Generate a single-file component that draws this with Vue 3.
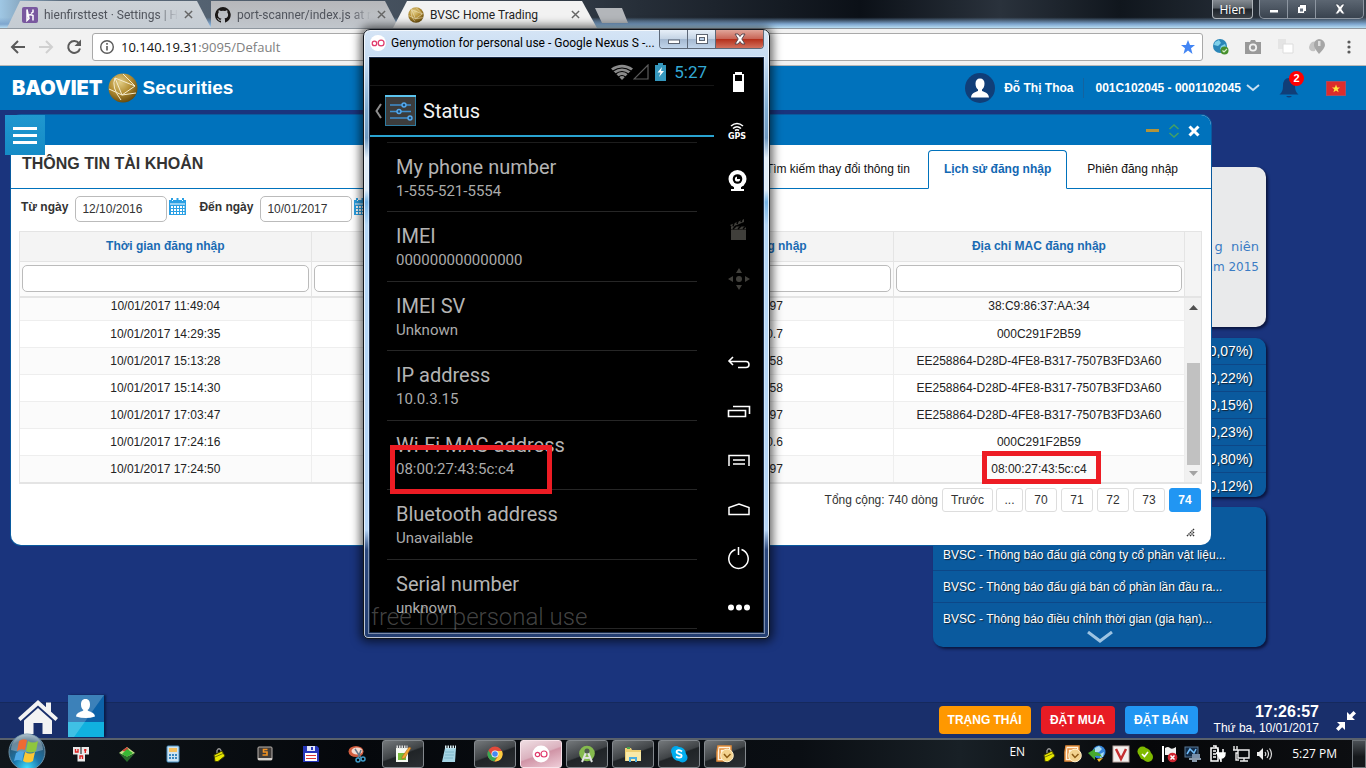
<script setup>
import { ref } from 'vue'

const fromDate = ref('12/10/2016')
const toDate = ref('10/01/2017')

const columns = ['Thời gian đăng nhập', '', 'Địa chỉ IP đăng nhập', 'Địa chỉ MAC đăng nhập']
const rows = [
  ['10/01/2017 11:49:04', '', '10.140.19.97', '38:C9:86:37:AA:34'],
  ['10/01/2017 14:29:35', '', '192.168.10.7', '000C291F2B59'],
  ['10/01/2017 15:13:28', '', '10.140.19.58', 'EE258864-D28D-4FE8-B317-7507B3FD3A60'],
  ['10/01/2017 15:14:30', '', '10.140.19.58', 'EE258864-D28D-4FE8-B317-7507B3FD3A60'],
  ['10/01/2017 17:03:47', '', '10.140.19.97', 'EE258864-D28D-4FE8-B317-7507B3FD3A60'],
  ['10/01/2017 17:24:16', '', '192.168.10.6', '000C291F2B59'],
  ['10/01/2017 17:24:50', '', '10.140.19.97', '08:00:27:43:5c:c4'],
]
const pages = ['70', '71', '72', '73', '74']
const quotes = ['(0,07%)', '(0,22%)', '(0,15%)', '(0,23%)', '(0,80%)', '(0,12%)']
const news = [
  'BVSC - Thông báo đấu giá công ty cổ phần vật liệu...',
  'BVSC - Thông báo đấu giá bán cổ phần lần đầu ra...',
  'BVSC - Thông báo điều chỉnh thời gian (gia hạn)...',
]
const status = [
  ['My phone number', '1-555-521-5554'],
  ['IMEI', '000000000000000'],
  ['IMEI SV', 'Unknown'],
  ['IP address', '10.0.3.15'],
  ['Wi-Fi MAC address', '08:00:27:43:5c:c4'],
  ['Bluetooth address', 'Unavailable'],
  ['Serial number', 'unknown'],
]
</script>

<template>
  <div class="screen">
    <!-- browser tab strip -->
    <div class="tabstrip">
      <div class="tab tab-one">
        <svg class="fav" viewBox="0 0 16 16"><rect width="16" height="16" rx="2" fill="#79589f" /><path d="M5 2.500v11l2-2zM5 3v6q3-2 6-.5v5M11 2.500v2.500l-2 1.500" fill="none" stroke="#fff" stroke-width="1.500" /></svg>
        <span class="tab-name fade">hienfirsttest · Settings | H</span>
        <button class="tab-x" aria-label="Close tab"><svg viewBox="0 0 10 10"><path d="M1 1l8 8M9 1l-8 8" /></svg></button>
      </div>
      <div class="tab tab-two">
        <svg class="fav" viewBox="0 0 16 16"><path fill="#1b1817" d="M8 0a8 8 0 0 0-2.500 15.600c.4.100.5-.2.500-.4v-1.500c-2.200.5-2.700-.9-2.700-.9-.4-.9-.9-1.200-.9-1.200-.7-.5 0-.5 0-.5.800.1 1.200.8 1.200.8.7 1.300 1.900.9 2.400.7 0-.5.3-.9.5-1.100-1.800-.2-3.600-.9-3.600-4 0-.9.300-1.600.8-2.100-.1-.2-.4-1 .1-2.100 0 0 .7-.2 2.200.8a7.600 7.600 0 0 1 4 0c1.500-1 2.200-.8 2.200-.8.4 1.100.2 1.900.1 2.100.5.600.8 1.300.8 2.100 0 3.100-1.900 3.700-3.600 3.900.3.300.5.800.5 1.500v2.200c0 .2.100.5.500.4A8 8 0 0 0 8 0z" /></svg>
        <span class="tab-name fade">port-scanner/index.js at r</span>
        <button class="tab-x" aria-label="Close tab"><svg viewBox="0 0 10 10"><path d="M1 1l8 8M9 1l-8 8" /></svg></button>
      </div>
      <div class="tab tab-active">
        <svg class="fav" viewBox="0 0 30 30"><use href="#globe" /></svg>
        <span class="tab-name">BVSC Home Trading</span>
        <button class="tab-x" aria-label="Close tab"><svg viewBox="0 0 10 10"><path d="M1 1l8 8M9 1l-8 8" /></svg></button>
      </div>
      <button class="tab-new" aria-label="New tab"></button>
      <div class="strip-right">
        <button class="profile">Hien</button>
        <div class="wincontrols">
          <button aria-label="Minimize"><svg width="12" height="12" viewBox="0 0 12 12"><rect x="1.500" y="6.500" width="9" height="3.500" fill="#fff" stroke="#47505c" /></svg></button>
          <button aria-label="Restore"><svg width="12" height="12" viewBox="0 0 12 12"><path d="M3.500 1.500h7v7h-2v2h-7v-7h2z" fill="#fff" stroke="#47505c" /><rect x="4" y="5.500" width="3" height="3" fill="#67717f" /></svg></button>
          <button class="wide" aria-label="Close"><svg width="14" height="12" viewBox="0 0 14 12"><path d="M2 1h3l2 2.500L9 1h3L8.800 6 12 11H9L7 8.500 5 11H2l3.200-5z" fill="#fff" stroke="#47505c" /></svg></button>
        </div>
      </div>
    </div>

    <!-- browser toolbar -->
    <div class="toolbar">
      <div class="nav">
        <button aria-label="Back"><svg viewBox="0 0 16 16"><path d="M15 8H2M8 2L2 8l6 6" fill="none" stroke="#5a5a5a" stroke-width="2" /></svg></button>
        <button aria-label="Forward"><svg viewBox="0 0 16 16"><path d="M1 8h13M8 2l6 6-6 6" fill="none" stroke="#d0d0d0" stroke-width="2" /></svg></button>
        <button aria-label="Reload"><svg viewBox="0 0 16 16"><path d="M13 4.300A6 6 0 1 0 14 9.500" fill="none" stroke="#5a5a5a" stroke-width="2" /><path d="M15 .5V7H8.500z" fill="#5a5a5a" /></svg></button>
      </div>
      <div class="address">
        <svg width="16" height="16" viewBox="0 0 16 16"><circle cx="8" cy="8" r="6.300" fill="none" stroke="#5a5a5a" stroke-width="1.400" /><path d="M8 7v4.500M8 4v1.700" stroke="#5a5a5a" stroke-width="1.600" /></svg>
        <span class="url"><b>10.140.19.31</b>:9095/Default</span>
        <svg class="star" width="16" height="16" viewBox="0 0 16 16"><path fill="#4285f4" d="M8 1l2 5h5l-4 3.200L12.500 15 8 11.600 3.500 15 5 9.200 1 6h5z" /></svg>
      </div>
      <div class="exts">
        <svg viewBox="0 0 18 18"><circle cx="8" cy="8" r="7" fill="#2a86b8" /><path d="M3 4l4-2 2 3-3 3-4-1zM9 8l4-2 1 3-3 4-3-2z" fill="#7fd0ea" /><circle cx="12.500" cy="12.500" r="4" fill="#47902d" /><path d="M10.500 12.500l1.500 1.500 3-3" fill="none" stroke="#d4eec9" stroke-width="1.200" /></svg>
        <svg viewBox="0 0 18 18"><path d="M1 4h5l1-2h4l1 2h5v12H1z" fill="#999" /><circle cx="9" cy="9.500" r="3.200" fill="none" stroke="#f2f2f2" stroke-width="1.800" /></svg>
        <svg viewBox="0 0 18 18"><path d="M2 1h8v10H2z" fill="#e4e4e4" /><path d="M7 6h10v9H7z" fill="#fff" stroke="#dcdcdc" /></svg>
        <svg viewBox="0 0 18 18"><path d="M1 9q2-7 8-5l-2 9q-6 1-6-4z" fill="#c4c4c4" /><path d="M11 1a6 6 0 0 1 6 6q0 3-6 9-5-6-5-9a6 6 0 0 1 5-6z" fill="#a6a6a6" /><path d="M10 3v5h2.500V3z" fill="#dedede" /></svg>
        <svg viewBox="0 0 18 18"><g fill="#5a5a5a"><circle cx="9" cy="4" r="1.600" /><circle cx="9" cy="9" r="1.600" /><circle cx="9" cy="14" r="1.600" /></g></svg>
      </div>
    </div>

    <!-- trading site -->
    <div class="site">
      <header class="site-head">
        <div class="brand">
          <span class="brand-a">BAOVIET</span>
          <svg width="30" height="30" viewBox="0 0 30 30">
            <defs>
              <radialGradient id="gold" cx="0.4" cy="0.3" r="0.75"><stop offset="0" stop-color="#e2cd85" /><stop offset="0.5" stop-color="#b48f35" /><stop offset="1" stop-color="#5f4308" /></radialGradient>
              <g id="globe"><circle cx="15" cy="15" r="14.500" fill="url(#gold)" /><path d="M7 5l20 8-13 9zM7 5q-4 9 6 22M1 16l13 6 14-2M15 1l12 12" fill="none" stroke="#f6eccc" stroke-width="1" /></g>
            </defs>
            <use href="#globe" />
          </svg>
          <span class="brand-b">Securities</span>
        </div>
        <div class="account">
          <svg class="avatar" width="30" height="30" viewBox="0 0 30 30"><circle cx="15" cy="15" r="15" fill="#103e78" /><path fill="#fff" d="M15 5.500c3 0 4.500 2 4.500 5s-1 5-2.500 6v1.500c2 1 6.500 1.500 7 6.500H6c.5-5 5-5.500 7-6.500v-1.500c-1.500-1-2.500-3-2.500-6s1.500-5 4.500-5z" /></svg>
          <span class="user">Đỗ Thị Thoa</span>
          <button class="acct">001C102045 - 0001102045
            <svg width="14" height="8" viewBox="0 0 14 8"><path d="M1 1l6 5 6-5" fill="none" stroke="#c9e0f2" stroke-width="2" /></svg>
          </button>
          <button class="bell" aria-label="Notifications">
            <svg width="20" height="22" viewBox="0 0 20 22"><path d="M10 1q6 0 6 8 0 6 3.500 8.500H.5Q4 15 4 9q0-8 6-8zM7 19h6q-3 3-6 0z" fill="#103e78" /></svg>
            <span class="badge">2</span>
          </button>
          <svg class="flag" width="20" height="15" viewBox="0 0 20 15"><rect x="0.500" y="0.500" width="19" height="14" fill="#dd2c2c" stroke="#a94b62" /><path d="M10 3.500l1.100 3h3l-2.400 1.800.9 3L10 9.500l-2.600 1.800.9-3L5.900 6.500h3z" fill="#ffe63b" /></svg>
        </div>
      </header>

      <div class="desk">
        <aside class="side">
          <section class="card banner"><p>g&nbsp; niên</p><p>năm 2015</p></section>
          <section class="card quotes"><div v-for="q in quotes" :key="q">{{ q }}</div></section>
          <section class="card news">
            <a v-for="n in news" :key="n" href="#">{{ n }}</a>
            <button aria-label="More news"><svg width="26" height="12" viewBox="0 0 26 12"><path d="M1 1l12 9 12-9" fill="none" stroke="#9dc3e2" stroke-width="3" /></svg></button>
          </section>
        </aside>

        <main class="panel">
          <div class="panel-bar">
            <button aria-label="Minimize panel"><svg width="14" height="14" viewBox="0 0 14 14"><rect x="0" y="5" width="13" height="3" fill="#b29339" /></svg></button>
            <button aria-label="Resize panel"><svg width="12" height="16" viewBox="0 0 12 16"><path d="M1.500 6L6 2l4.500 4M1.500 10L6 14l4.500-4" fill="none" stroke="#44a164" stroke-width="1.500" /></svg></button>
            <button aria-label="Close panel"><svg width="12" height="12" viewBox="0 0 12 12"><path d="M1.500 1.500l9 9M10.500 1.500l-9 9" stroke="#fff" stroke-width="3" /></svg></button>
          </div>
          <div class="panel-tabs">
            <h1>THÔNG TIN TÀI KHOẢN</h1>
            <nav>
              <a href="#">Tìm kiếm thay đổi thông tin</a>
              <a href="#" class="on">Lịch sử đăng nhập</a>
              <a href="#">Phiên đăng nhập</a>
            </nav>
          </div>
          <div class="range">
            <label for="from">Từ ngày</label><input id="from" v-model="fromDate" />
            <svg class="cal" viewBox="0 0 17 19"><use href="#calendar" /></svg>
            <label for="to">Đến ngày</label><input id="to" v-model="toDate" />
            <svg class="cal" viewBox="0 0 17 19">
              <defs><g id="calendar"><path fill="#2aa0e4" d="M0 3h17v15H0z" /><path d="M3 1v4M8.500 1v4M14 1v4" stroke="#2aa0e4" stroke-width="2" /><path fill="#fff" d="M1 6.500h15v1H1zM2 9h2v2H2zM5 9h2v2H5zM8 9h2v2H8zM11 9h2v2h-2zM14 9h1.500v2H14zM2 12h2v2H2zM5 12h2v2H5zM8 12h2v2H8zM11 12h2v2h-2zM14 12h1.500v2H14zM2 15h2v2H2zM5 15h2v2H5zM8 15h2v2H8zM11 15h2v2h-2zM14 15h1.500v2H14zM3 3h1v1H3zM13 3h1v1h-1z" /></g></defs>
              <use href="#calendar" />
            </svg>
          </div>

          <div class="grid">
            <div class="grid-head">
              <table>
                <thead>
                  <tr><th v-for="(c, i) in columns" :key="i">{{ c }}</th></tr>
                  <tr class="filters"><td v-for="(c, i) in columns" :key="i"><input :aria-label="'Lọc ' + c" /></td></tr>
                </thead>
              </table>
              <div class="corner"></div>
            </div>
            <div class="grid-body">
              <div class="rows">
                <table>
                  <tbody>
                    <tr v-for="r in rows" :key="r[0]"><td v-for="(v, i) in r" :key="i">{{ v }}</td></tr>
                  </tbody>
                </table>
              </div>
              <div class="scroll">
                <svg width="9" height="5" viewBox="0 0 9 5"><path d="M0 5l4.500-5L9 5z" fill="#505050" /></svg>
                <div class="thumb"></div>
                <svg width="9" height="5" viewBox="0 0 9 5"><path d="M0 0l4.500 5L9 0z" fill="#a3a3a3" /></svg>
              </div>
            </div>
            <div class="mark mark-mac"></div>
          </div>

          <div class="pager">
            <span>Tổng cộng: 740 dòng</span>
            <button class="prev">Trước</button>
            <button class="dots">...</button>
            <button v-for="p in pages" :key="p" :class="{ cur: p === '74' }">{{ p }}</button>
          </div>
          <svg class="grip" width="9" height="9" viewBox="0 0 9 9"><path d="M1 8L8 1M4 8l4-4M7 8l1-1" stroke="#333" stroke-width="1.500" stroke-dasharray="1.500 0.600" /></svg>
        </main>

        <button class="menu" aria-label="Menu"><i></i><i></i><i></i></button>
      </div>

      <footer class="site-foot">
        <a href="#" class="home" aria-label="Trang chủ"><svg width="40" height="36" viewBox="0 0 40 36"><path fill="#f3f3f3" d="M20 1l20 18-2.500 3L20 6.500 2.500 22 0 19zM28 3.500h5V13l-5-4.500z" /><path fill="#f3f3f3" d="M20 9L34 21.500V35H24.500V24h-9v11H6V21.500z" /></svg></a>
        <a href="#" class="tile" aria-label="Tài khoản"><svg width="36" height="42" viewBox="0 0 36 42"><path fill="#0c62a8" d="M0 0h36v27H0z" /><path fill="#10b1df" d="M0 27h36v15H0z" /><path fill="#fff" opacity=".2" d="M0 0h36L6 42H0z" /><path fill="#fff" d="M17.500 4c3.500 0 4.500 2.500 4.500 5.500s-1 4.500-2.500 5.500c1 2 7 1.500 7.500 6.500q-9 3-19 0c.5-5 6.500-4.500 7.500-6.500C14 14 13 12.500 13 9.500S14 4 17.500 4z" /></svg></a>
        <div class="actions">
          <button class="b-state">TRẠNG THÁI</button>
          <button class="b-buy">ĐẶT MUA</button>
          <button class="b-sell">ĐẶT BÁN</button>
        </div>
        <div class="time"><b>17:26:57</b><span>Thứ ba, 10/01/2017</span></div>
        <svg class="shrink" width="20" height="20" viewBox="0 0 20 20"><path fill="#fff" d="M11 1v8h8l-2.800-2.800L20 2.500 17.500 0l-3.700 3.800zM9 19v-8H1l2.800 2.800L0 17.500 2.500 20l3.700-3.800z" /></svg>
      </footer>
    </div>

    <!-- Windows taskbar -->
    <div class="taskbar">
      <button class="start" aria-label="Start">
        <svg width="38" height="38" viewBox="0 0 38 38">
          <defs><radialGradient id="orb" cx="0.5" cy="0.95" r="0.95"><stop offset="0" stop-color="#3fe0ff" /><stop offset="0.4" stop-color="#1b76ab" /><stop offset="0.8" stop-color="#2b5570" /><stop offset="1" stop-color="#8fa9b8" /></radialGradient></defs>
          <circle cx="19" cy="19" r="18" fill="url(#orb)" stroke="#6c90a6" /><path d="M3 17a16 16 0 0 1 32 0q-16 5-32 0z" fill="#fff" opacity=".3" />
          <path fill="#ef6a33" d="M11 8q4-3 8-1l-2 10q-4-2-8 1z" /><path fill="#8fc63d" d="M20 8q5 3 10 0l-2 10q-5 3-10 0z" /><path fill="#4fa9e6" d="M8 20q4-3 8-1l-2 9q-4-2-8 0z" /><path fill="#fcc733" d="M17 19q5 3 10 0l-2 9q-5 3-10 0z" />
        </svg>
      </button>
      <div class="slot"><svg viewBox="0 0 18 18"><g fill="#e9e9e9"><rect x="1" y="2" width="7.500" height="7.500" /><rect x="9.500" y="2" width="7.500" height="7.500" /><rect x="5.500" y="9" width="7.500" height="7.500" /></g><path d="M3.500 4v3h2.500V4M12 5h2.500M13.300 4v4M8 14v-3h2.500v3" fill="none" stroke="#d22" stroke-width="1.400" /></svg></div>
      <div class="slot"><svg viewBox="0 0 18 18"><path d="M9 2l8 6-8 4-8-4z" fill="#c8e08b" /><path d="M4 6l5-4 3 5z" fill="#d43b36" /><path d="M9 4l6 4-6 4-5-3z" fill="#38b834" /><path d="M1 8l8 4v5zM17 8l-8 4v5z" fill="#286b2a" /></svg></div>
      <div class="slot"><svg viewBox="0 0 18 18"><rect x="3" y="1" width="12" height="16" rx="1" fill="#cfe4f3" stroke="#4b93c5" /><rect x="5" y="3" width="8" height="4" fill="#f5c05e" /><path d="M5 9h2v2H5zM8 9h2v2H8zM11 9h2v2h-2zM5 12h2v2H5zM8 12h2v2H8zM11 12h2v2h-2z" fill="#3a87bf" /></svg></div>
      <div class="slot"><svg viewBox="0 0 18 18"><use href="#lock" /></svg></div>
      <div class="slot"><svg viewBox="0 0 18 18"><rect x="2" y="2" width="14" height="13" rx="1" fill="#403c3a" stroke="#b9b3ae" /><path d="M2 14h14" stroke="#d5d1cd" stroke-width="2" /><path d="M11.500 4.500h-4v2.500h3.500v3H6.500" fill="none" stroke="#f29222" stroke-width="1.600" /></svg></div>
      <div class="slot"><svg viewBox="0 0 18 18"><path d="M1 1h14l2 2v14H1z" fill="#2636ba" /><rect x="5" y="1" width="8" height="5" fill="#e2e6fa" /><rect x="9" y="2" width="2" height="3" fill="#2636ba" /><rect x="3" y="8" width="12" height="8" fill="#fff" /><path d="M4 10.500h10M4 13.500h10" stroke="#d33" /></svg></div>
      <div class="slot"><svg viewBox="0 0 18 18"><ellipse cx="8" cy="6.500" rx="7.500" ry="5.500" fill="#d35d3f" /><ellipse cx="9" cy="6" rx="5.500" ry="3.500" fill="#f4dcd2" /><path d="M7 4l6 9M13 5l-3 8" stroke="#667789" stroke-width="1.500" /><circle cx="10" cy="15" r="2" fill="none" stroke="#3f9cc9" stroke-width="1.500" /><circle cx="15" cy="14" r="2" fill="none" stroke="#3f9cc9" stroke-width="1.500" /></svg></div>
      <div class="slot open"><svg viewBox="0 0 18 18"><rect x="2" y="3" width="12" height="14" fill="#f7faf2" /><path d="M2.500 2h11" stroke="#ddd" stroke-width="3" stroke-dasharray="1.500 1" /><path d="M4 8h8v7H4z" fill="#79bd3a" /><path d="M8 12l7-10 2 1-6 10-3 1z" fill="#f1a531" stroke="#9b5a1e" stroke-width=".5" /></svg></div>
      <div class="slot"><svg viewBox="0 0 18 18"><path d="M5 3h11l-1 14H2z" fill="#a5d5e5" /><path d="M5 2h11" stroke="#d9eef4" stroke-width="3" stroke-dasharray="1.500 1" /><path d="M5 7h9M5 10h9M4 13h9" stroke="#7eb7ca" /></svg></div>
      <div class="slot open"><svg viewBox="0 0 18 18"><circle cx="9" cy="9" r="7.500" fill="#e24a3b" /><path d="M2.300 5.500a7.500 7.500 0 0 0 6 11L12 10 6 10.500z" fill="#38a853" /><path d="M8.500 16.500A7.500 7.500 0 0 0 16 6H9l3.500 5z" fill="#fcce40" /><circle cx="9" cy="9" r="3.500" fill="#fff" /><circle cx="9" cy="9" r="2.800" fill="#4588f1" /></svg></div>
      <div class="slot open pink"><svg viewBox="0 0 18 18"><circle cx="9" cy="9" r="8.500" fill="#fff" /><circle cx="5.500" cy="9.500" r="2.200" fill="none" stroke="#e0396b" stroke-width="1.200" /><circle cx="12" cy="9" r="3" fill="none" stroke="#e0396b" stroke-width="1.200" /></svg></div>
      <div class="slot open"><svg viewBox="0 0 18 18"><circle cx="9" cy="8.500" r="7.800" fill="#85ba4e" /><path d="M9 5L4 17M9 5l5 12M5 12q4 2 8 0" fill="none" stroke="#dfe3e0" stroke-width="2" /><circle cx="9" cy="6" r="2.500" fill="#505a50" /></svg></div>
      <div class="slot open"><svg viewBox="0 0 18 18"><path d="M1 3h6l1 2h9v11H1z" fill="#eecf73" /><path d="M2 7h15v9H2z" fill="#f9e9a8" /><path d="M5 17v-5h8v5h-2v-3H7v3z" fill="#4daee0" /><path d="M3 2h3v2H3z" fill="#4aa64e" /></svg></div>
      <div class="slot open"><svg viewBox="0 0 18 18"><circle cx="6" cy="6" r="5" fill="#00a5ea" /><circle cx="12.500" cy="12.500" r="5" fill="#00a5ea" /><circle cx="9" cy="9" r="7" fill="#00aff0" /><path d="M12 6.500Q9 4 6.800 6c-1 2 1 2.500 2.500 3s3.200 1 2 3q-2.300 1.500-5.300-.5" fill="none" stroke="#fff" stroke-width="1.800" /></svg></div>
      <div class="slot open"><svg viewBox="0 0 18 18"><use href="#mail" /></svg></div>

      <div class="tray">
        <span class="lang">EN</span>
        <svg viewBox="0 0 18 18"><defs><g id="lock"><path d="M7 8V5.500q2-3.500 4 0V7" fill="none" stroke="#999" stroke-width="1.400" /><path d="M4 10l8-4 3 5-7 5.500H5z" fill="#e8e800" stroke="#3f3f00" /><path d="M5 12l8-3.500" stroke="#77770a" /></g></defs><use href="#lock" /></svg>
        <svg viewBox="0 0 18 18"><defs><g id="mail"><path d="M2 1h13v11l-4 4H1V7z" fill="#fff3df" stroke="#e58d3a" stroke-width="1.500" /><path d="M4 14V4h9" fill="none" stroke="#e58d3a" stroke-width="1.500" /><circle cx="11" cy="10.500" r="6.300" fill="#f3d28e" stroke="#fff0cb" /><path d="M8 9l3 3.500L14.500 9" fill="none" stroke="#8c5b15" stroke-width="1.500" /></g></defs><use href="#mail" /></svg>
        <svg viewBox="0 0 18 18"><circle cx="11" cy="7" r="6.500" fill="#3384d8" /><path d="M7 3l4-2 3 3-3 3-4 1zM12 9l4-2-1 5-3 1z" fill="#a9dcf4" /><path d="M0 8l7-4v3q5 0 7 5-4-2-7-1v4z" fill="#47a82e" /><path d="M9 14l6-1-4 4z" fill="#f1be30" /></svg>
        <svg viewBox="0 0 18 18"><rect x="1" y="1" width="16" height="16" fill="#f3f0ee" stroke="#b9a8a4" /><path d="M4 4l5 10 5-10" fill="none" stroke="#c42f31" stroke-width="2.500" /></svg>
        <svg viewBox="0 0 18 18"><circle cx="6.500" cy="6.500" r="5" fill="#7fba00" /><circle cx="12" cy="12" r="5" fill="#7fba00" /><circle cx="9" cy="9" r="6" fill="#7fba00" /><path d="M6 9l2.500 2.500L12 7" fill="none" stroke="#fff" stroke-width="1.600" /></svg>
        <svg viewBox="0 0 18 18"><path d="M3 1v16" stroke="#fff" stroke-width="2" /><path d="M5 3q3-2 5 0t6-1v8H5z" fill="#f0f0f0" /><circle cx="12.500" cy="12.500" r="4.800" fill="#ce2430" /><path d="M10.500 10.500l4 4M14.500 10.500l-4 4" stroke="#fff" stroke-width="1.500" /></svg>
        <svg viewBox="0 0 18 18"><rect x="1" y="2" width="13" height="10" fill="#122a45" stroke="#587998" /><path d="M3 9l3-5 4 4 2-4" fill="none" stroke="#71bdfa" stroke-width="1.500" /><path d="M8 9h8v5H8z" fill="#788ea8" /><path d="M5 14h12M8 16h5" stroke="#8a9aac" stroke-width="2" /></svg>
        <svg viewBox="0 0 18 18"><path d="M3 3h7v13H3zM5 1h3v2M5 6h3M5 9h3M5 12h3" fill="none" stroke="#fff" stroke-width="1.500" /><path d="M10 4v4M15 4v4M8 8h9q0 5-4 5v4" fill="#fff" stroke="#fff" stroke-width="1.500" /></svg>
        <svg viewBox="0 0 18 18"><path d="M6 5h11v8H6zM8 16h8M12 13v3M2 1v4M5 1v4M1 5h5v3H4v7h3" fill="none" stroke="#eee" stroke-width="1.400" /></svg>
        <svg viewBox="0 0 18 18"><path d="M1 7h2l4-4v12l-4-4H1z" fill="#eee" /><path d="M9 7q1.500 2 0 4M11 5q3 4 0 8M13.500 3.500q4 5.500 0 11" fill="none" stroke="#ddd" stroke-width="1.200" /></svg>
        <span class="clock">5:27 PM</span>
        <button class="peek" aria-label="Show desktop"></button>
      </div>
    </div>

    <!-- emulator window -->
    <section class="emu">
      <div class="emu-title">
        <svg width="16" height="16" viewBox="0 0 18 18"><circle cx="9" cy="9" r="9" fill="#fff" /><circle cx="5" cy="9.500" r="2.500" fill="none" stroke="#e0396b" stroke-width="1.400" /><circle cx="12.500" cy="9" r="3.300" fill="none" stroke="#e0396b" stroke-width="1.400" /></svg>
        <span>Genymotion for personal use - Google Nexus S -...</span>
        <div class="emu-ctl">
          <button aria-label="Minimize"><svg width="14" height="12" viewBox="0 0 14 12"><rect x="1.500" y="7" width="11" height="3.500" fill="#fff" stroke="#5b6370" /></svg></button>
          <button aria-label="Maximize"><svg width="14" height="12" viewBox="0 0 14 12"><rect x="1.500" y="1.500" width="11" height="9" fill="#fff" stroke="#5b6370" /><rect x="4.500" y="4.500" width="5" height="3" fill="#bcd0e8" stroke="#5b6370" /></svg></button>
          <button class="red" aria-label="Close"><svg width="14" height="12" viewBox="0 0 14 12"><path d="M2 1h3l2 2.500L9 1h3L8.800 6 12 11H9L7 8.500 5 11H2l3.200-5z" fill="#fff" stroke="#5b4850" /></svg></button>
        </div>
      </div>
      <div class="emu-body">
        <div class="phone">
          <div class="phone-status">
            <svg width="22" height="16" viewBox="0 0 22 16"><path d="M0 4.500Q11-3 22 4.500L11 16z" fill="#8b8b8b" /><path d="M2 7q9-6 18 0M4.500 10q6.500-5 13 0M7.500 13q3.500-3 7 0" fill="none" stroke="#000" stroke-width="1.200" /></svg>
            <svg class="sig" width="16" height="16" viewBox="0 0 16 16"><path d="M15 1v14H1z" fill="none" stroke="#5c5c5c" stroke-width="1.200" /></svg>
            <svg class="bat" width="11" height="18" viewBox="0 0 11 18"><path d="M3 0h5v2h3v16H0V2h3z" fill="#3597bd" /><path d="M7 4L2.500 9.500h3L4 14l5-6H6z" fill="#fff" /></svg>
            <span>5:27</span>
          </div>
          <div class="phone-bar">
            <svg width="8" height="16" viewBox="0 0 8 16"><path d="M7 1L2.500 8 7 15" fill="none" stroke="#8e8e8e" stroke-width="2" /></svg>
            <svg width="31" height="31" viewBox="0 0 31 31"><rect x="0.500" y="0.500" width="30" height="30" fill="#3c3c3c" stroke="#2e7ba0" /><path d="M0 1h31" stroke="#5cc4ee" stroke-width="2" /><path d="M5 10h21M5 16.500h21M5 23h21" stroke="#3f8fce" stroke-width="1.400" /><g fill="#1d4a70" stroke="#54aaf0" stroke-width="1.400"><circle cx="19" cy="10" r="2" /><circle cx="14" cy="16.500" r="2" /><circle cx="25" cy="23" r="2" /></g></svg>
            <h2>Status</h2>
          </div>
          <div class="list">
            <div v-for="s in status" :key="s[0]" class="item"><span>{{ s[0] }}</span><small>{{ s[1] }}</small></div>
          </div>
          <div class="water">free for personal use</div>
          <div class="mark mark-phone"></div>
        </div>
        <div class="tools">
          <button aria-label="Battery"><svg viewBox="0 0 34 34"><path d="M13 6h7v2h2v18H11V8h2z" fill="#fff" /><path d="M13 9h7v6h-7z" fill="#000" /></svg></button>
          <button aria-label="GPS"><svg viewBox="0 0 34 34"><path d="M9 11q6-5 12 0M11 13.500q4-3.500 8 0M13 15.500q2-1.500 4 0" fill="none" stroke="#fff" stroke-width="1.600" /><text x="15" y="24" text-anchor="middle" class="gps">GPS</text></svg></button>
          <button aria-label="Camera"><svg viewBox="0 0 34 34"><circle cx="15.500" cy="15" r="9" fill="#fff" /><circle cx="15.500" cy="15" r="4.800" fill="#000" /><circle cx="15.500" cy="15" r="2.600" fill="#fff" /><path d="M15 12h3v3h-3z" fill="#000" /><path d="M12 22h7v3h-7z" fill="#fff" /><path d="M9 26h13" stroke="#fff" stroke-width="2" /></svg></button>
          <button aria-label="Capture"><svg viewBox="0 0 34 34"><path d="M9 17h15v10H9z" fill="#403f3b" /><path d="M8 12l12-5 2-1v3L10 14z" fill="#403f3b" /><path d="M9 15h15" stroke="#403f3b" stroke-width="3" /><path d="M11 16l3-3M16 16l3-3M21 16l3-3M11 13l1-3M15 11l1-3M19 9l1-3" stroke="#000" stroke-width="1.500" /></svg></button>
          <button aria-label="Remote control"><svg viewBox="0 0 34 34"><path fill="#403f3b" d="M17 6l3 5h-6zM17 28l3-5h-6zM6 17l5-3v6zM28 17l-5-3v6z" /><circle cx="17" cy="17" r="3" fill="#403f3b" /></svg></button>
          <div class="sep"></div>
          <button aria-label="Back"><svg viewBox="0 0 34 34"><path d="M11 12l-4 4 4 4M7 16.500h17q3 0 3 3t-3 3H16" fill="none" stroke="#fff" stroke-width="1.600" /></svg></button>
          <button aria-label="Recent apps"><svg viewBox="0 0 34 34"><path d="M6.500 16.500h17v6h-17zM11 12.500h16.500V20" fill="none" stroke="#fff" stroke-width="1.600" /></svg></button>
          <button aria-label="Menu"><svg viewBox="0 0 34 34"><path d="M7 23V12.500h20V23" fill="none" stroke="#fff" stroke-width="1.500" /><path d="M11 17h12M11 21h12" stroke="#fff" stroke-width="1.500" /></svg></button>
          <button aria-label="Home"><svg viewBox="0 0 34 34"><path d="M7 22.500v-7l10-3.500 10 3.500v7z" fill="none" stroke="#fff" stroke-width="1.500" /></svg></button>
          <button aria-label="Power"><svg viewBox="0 0 34 34"><path d="M13.500 8.500a9.700 9.700 0 1 0 6 0M16.500 6v8" fill="none" stroke="#fff" stroke-width="1.500" /></svg></button>
          <button aria-label="More"><svg viewBox="0 0 34 34"><g fill="#fff"><circle cx="9" cy="17.500" r="3" /><circle cx="17" cy="17.500" r="3" /><circle cx="25" cy="17.500" r="3" /></g></svg></button>
        </div>
      </div>
    </section>
  </div>
</template>

<style>
html, body { margin: 0; background: #1a347d; }
</style>

<style scoped>
* { box-sizing: border-box; }
button { border: 0; background: none; padding: 0; margin: 0; font: inherit; color: inherit; cursor: pointer; }
svg { display: block; flex: none; }
a { color: inherit; text-decoration: none; }
p, h1, h2 { margin: 0; }

.screen { position: relative; display: grid; grid-template-rows: 28px 38px 1fr 30px; height: 100vh; overflow: hidden; font: 12px/16px "Liberation Sans", Arial, sans-serif; color: #333; }

/* tab strip */
.tabstrip { display: flex; align-items: flex-end; padding-left: 7px; background: linear-gradient(180deg, transparent 62%, #7ea6cf 86%, #b9ddf2), linear-gradient(90deg, #9fc7e4 0, #5f6f80 60px, #3c4652 500px, #262e38 640px, #0b1017 860px, #2a323c 1000px, #10161d 1120px, #39434f 1366px); font-family: Roboto, sans-serif; }
.tab { display: flex; align-items: center; height: 27px; padding: 0 18px 0 15px; color: #50545c; margin-right: -6px; }
.tab-one { width: 204px; background: linear-gradient(#ccd1d6, #c5ccd3); clip-path: polygon(13px 0, 190px 0, 204px 100%, 0 100%); }
.tab-two { width: 194px; background: linear-gradient(#b6b7ba, #c1c6cc); clip-path: polygon(6px 0, 180px 0, 194px 100%, 6px 100%); padding: 0 13px 0 10px; }
.tab-active { width: 204px; background: #f2f2f2; color: #222; clip-path: polygon(14px 0, 189px 0, 204px 100%, 0 100%); padding: 0 17px 0 15px; }
.fav { width: 16px; height: 16px; margin-right: 6px; }
.tab-name { flex: 1; white-space: nowrap; overflow: hidden; }
.fade { mask-image: linear-gradient(90deg, #000 85%, transparent); }
.tab-x { width: 9px; height: 9px; margin-left: 6px; }
.tab-x path { stroke: #666; stroke-width: 1.6; }
.tab-new { width: 33px; height: 15px; margin: 0 0 5px 4px; background: #b3b6ba; clip-path: polygon(0 0, 27px 0, 33px 100%, 7px 100%); }
.strip-right { display: flex; gap: 6px; margin-left: auto; padding-right: 2px; align-self: flex-start; font-family: "Open Sans", sans-serif; }
.profile { width: 41px; height: 19px; border: 1px solid #aeb4ba; border-top: 0; border-radius: 0 0 4px 4px; background: linear-gradient(#858b92, #596067 45%, #1e2329 50%, #3c4248); color: #fff; line-height: 17px; }
.wincontrols { display: flex; height: 19px; border: 1px solid #8d96a1; border-top: 0; border-radius: 0 0 5px 5px; background: linear-gradient(#5c6672, #39434f); }
.wincontrols button { display: grid; place-items: center; width: 28px; border-right: 1px solid #8d96a1; }
.wincontrols .wide { width: 47px; border: 0; }

/* toolbar */
.toolbar { display: flex; align-items: center; background: #f2f2f2; border-top: 1px solid #8f979f; border-bottom: 1px solid #b8b8b8; padding: 0 8px 0 10px; }
.nav { display: flex; gap: 12px; width: 82px; }
.nav svg { width: 16px; height: 16px; }
.address { flex: 1; display: flex; align-items: center; gap: 6px; height: 28px; border: 1px solid #a9a9a9; border-radius: 3px; background: #fff; padding: 0 6px; }
.url { font: 13px/20px "Open Sans", sans-serif; color: #808080; flex: 1; white-space: nowrap; }
.url b { font-weight: 400; color: #111; }
.exts { display: flex; gap: 14px; margin-left: 9px; }
.exts svg { width: 18px; height: 18px; }

/* site header */
.site { display: grid; grid-template-rows: 44px 1fr 36px; min-height: 0; background: #1a347d; }
.site-head { display: flex; align-items: center; justify-content: space-between; background: #0072bc; color: #fff; padding: 0 20px 0 12px; }
.brand { display: flex; align-items: center; gap: 5px; }
.brand-a { font: 900 20px/24px Inter, sans-serif; }
.brand-b { font: bold 19px/24px "Liberation Sans", Arial, sans-serif; }
.account { display: flex; align-items: center; font-weight: bold; }
.user { margin-left: 9px; }
.acct { display: flex; align-items: center; gap: 5px; margin-left: 9px; padding-left: 12px; border-left: 1px solid #14639f; height: 20px; font-weight: bold; }
.bell { position: relative; margin: 0 27px 0 19px; }
.badge { position: absolute; left: 10px; top: -6px; width: 15px; height: 15px; border-radius: 50%; background: #f00; font: bold 11px/15px "Liberation Sans", Arial, sans-serif; text-align: center; }

/* desk */
.desk { position: relative; min-height: 0; }
.side { position: absolute; right: 100px; top: 57px; width: 333px; display: flex; flex-direction: column; gap: 11px; }
.card { border-radius: 10px; background: #0a5a9e; box-shadow: 2px 2px 3px rgba(0, 0, 20, .6); color: #fff; overflow: hidden; }
.banner { height: 160px; background: #e9eaeb; color: #3b7cc4; font: 13px/20px "DejaVu Sans", sans-serif; padding: 70px 7px 0; text-align: right; }
.banner p + p { font-size: 12px; }
.quotes { height: 159px; font-size: 14px; text-align: right; text-shadow: 1px 1px 1px #123; }
.quotes div { height: 27px; line-height: 26px; padding-right: 13px; border-bottom: 1px solid #0d4787; }
.quotes div:last-child { border: 0; }
.news { height: 140px; margin-top: -1px; padding-top: 32px; position: relative; text-shadow: 1px 1px 1px #123; }
.news a { display: block; height: 32px; line-height: 32px; padding-left: 10px; border-bottom: 1px solid #0d4787; }
.news a:nth-child(3) { border: 0; }
.news button { display: block; margin: -4px auto 0; width: 26px; }

.menu { position: absolute; left: 5px; top: 5px; width: 40px; height: 40px; background: linear-gradient(#1f97cf, #158bc6); display: flex; flex-direction: column; align-items: center; justify-content: center; gap: 4px; }
.menu i { width: 24px; height: 3px; background: #fff; }

/* account panel */
.panel { position: absolute; left: 11px; right: 155px; top: 5px; background: #fff; border-radius: 10px; box-shadow: 0 0 0 1px #0a5a9e; overflow: hidden; padding-bottom: 8px; }
.panel-bar { height: 30px; background: #0072bc; display: flex; align-items: center; justify-content: flex-end; gap: 8px; padding: 2px 11px 0 0; }
.panel-tabs { display: flex; justify-content: space-between; height: 44px; border-bottom: 1px solid #0072bc; padding: 5px 15px 0 11px; }
.panel-tabs h1 { font: bold 16px/28px "Liberation Sans", Arial, sans-serif; }
.panel-tabs nav { display: flex; height: 39px; color: #111; white-space: nowrap; }
.panel-tabs nav a { padding: 0 18px 0 20px; line-height: 38px; }
.panel-tabs nav .on { color: #1268b3; font-weight: bold; border: 1px solid #0072bc; border-bottom-color: #fff; border-radius: 4px 4px 0 0; background: #fff; padding: 0 15px; line-height: 36px; }
.range { display: flex; align-items: center; height: 42px; padding: 0 10px 2px; }
.range label { font-weight: bold; line-height: 16px; padding-bottom: 4px; }
.range input { width: 92px; height: 26px; margin-left: 7px; border: 1px solid #bbb; border-radius: 5px; padding: 0 6px; font: 12px "Liberation Sans", Arial, sans-serif; color: #333; }
.cal { width: 17px; height: 19px; margin: 0 13px 6px 2px; }
.grid { position: relative; margin: 0 9px 0 8px; border: 1px solid #e4e4e4; border-bottom-width: 2px; }
.grid-head, .grid-body { display: flex; }
table { width: 100%; border-collapse: collapse; table-layout: fixed; }
.grid-head { border-bottom: 2px solid #e4e4e4; background: #f4f4f4; }
.corner { width: 16px; flex: none; }
th { height: 29px; padding: 0; color: #1a6bb3; font-weight: bold; border-right: 1px solid #e4e4e4; border-bottom: 1px solid #e4e4e4; }
.filters td { background: #fbfbfb; padding: 0 2px; height: 35px; border-right: 1px solid #e4e4e4; }
.filters input { display: block; width: 100%; height: 27px; border: 1px solid #bbb; border-radius: 5px; }
.grid-body { height: 184px; }
.rows { flex: 1; display: flex; align-items: flex-end; overflow: hidden; }
.rows td { height: 27px; padding: 0; text-align: center; color: #222; border-right: 1px solid #eee; border-bottom: 1px solid #eee; }
.rows tr:nth-child(odd) { background: #fbfbfb; }
.rows tr:last-child td { border-bottom: 0; }
.scroll { width: 16px; flex: none; background: #f1f1f1; display: flex; flex-direction: column; align-items: center; padding: 7px 0 6px; }
.thumb { width: 13px; height: 102px; background: #c1c1c1; margin: auto 0 6px; }
.mark { position: absolute; border: 5px solid #ed1c24; }
.mark-mac { right: 100px; bottom: -2px; width: 119px; height: 33px; }
.pager { display: flex; justify-content: flex-end; align-items: center; gap: 4px; padding: 4px 10px 0; }
.pager button { width: 32px; height: 24px; border: 1px solid #ddd; border-radius: 3px; background: #fff; }
.pager .prev { width: 51px; margin-right: -1px; }
.pager .dots { width: 27px; margin-right: -2px; }
.pager .cur { background: #2196f3; border-color: #2196f3; color: #fff; font-weight: bold; }
.grip { margin: 16px 16px 0 auto; }

/* site footer */
.site-foot { display: flex; align-items: flex-end; background: #192f6b; border-top: 1px solid #15295d; color: #fff; padding-right: 10px; }
.home { margin: 0 10px 3px 18px; }
.tile { box-shadow: 2px 0 2px #0a1b47; margin-bottom: 1px; z-index: 1; }
.actions { display: flex; gap: 10px; margin: 0 0 4px auto; }
.actions button { height: 28px; border-radius: 4px; font-weight: bold; white-space: nowrap; }
.b-state { width: 92px; background: #ff9800; }
.b-buy { width: 74px; background: #e81c24; }
.b-sell { width: 73px; background: #2196f3; }
.time { display: flex; flex-direction: column; text-align: right; margin: 0 17px 2px 16px; white-space: nowrap; }
.time b { font-size: 16px; line-height: 18px; }
.time span { line-height: 15px; }
.shrink { margin-bottom: 7px; }

/* taskbar */
.taskbar { display: flex; align-items: center; gap: 4px; background: linear-gradient(90deg, #10161b, #05080c 350px, #0a0e13 800px, #182026 960px, #060709 1150px, #0d0f12); border-top: 2px solid #59616b; z-index: 2; }
.start { width: 56px; padding-left: 8px; height: 38px; margin-top: -4px; }
.slot { width: 42px; height: 28px; display: grid; place-items: center; flex: none; border-radius: 3px; }
.slot svg { width: 18px; height: 18px; }
.open { border: 1px solid #83888d; background: linear-gradient(160deg, #74787b, #3f4346 48%, #202427 52%, #2b2f33); }
.pink { border-color: #f8e3ea; background: linear-gradient(160deg, #efdde2, #dbb2bf 48%, #d094a6 52%, #efcdd8); }
.tray { margin-left: auto; height: 28px; display: flex; align-items: center; gap: 6px; color: #fff; font-family: "Open Sans", sans-serif; }
.tray svg { width: 18px; height: 18px; }
.lang { margin-right: 9px; padding-bottom: 4px; }
.clock { margin: 0 9px 0 12px; white-space: nowrap; }
.peek { width: 14px; height: 28px; border: 1px solid #6e7479; background: linear-gradient(#4b5055, #15181b 60%); }

/* emulator window */
.emu { position: absolute; left: 363px; top: 29px; width: 407px; z-index: 3; border: 1px solid #10151c; border-radius: 7px 7px 5px 5px; background: linear-gradient(#d5e4f5 0, #c6dcf3 30px, #7daad0 80px, #6d97c0 108px, #e2eef9 128px, #dcebf8 160px, #75b4e6 172px, #b5d7f7 195px, #b5d5f7 500px, #2b487d 520px, #233e72); box-shadow: 0 0 10px 3px rgba(0, 0, 0, .6), inset 0 0 0 1px rgba(255, 255, 255, .7); padding: 0 5px 5px; }
.emu-title { display: flex; height: 27px; padding: 0 0 0 1px; color: #000; font-family: Roboto, sans-serif; white-space: nowrap; }
.emu-title > svg { margin-top: 5px; }
.emu-title > span { margin: 5px 0 0 5px; line-height: 16px; }
.emu-ctl { display: flex; margin-left: auto; height: 19px; border: 1px solid #5d6878; border-top: 0; border-radius: 0 0 4px 4px; overflow: hidden; flex: none; }
.emu-ctl button { width: 28px; display: grid; place-items: center; border-right: 1px solid #5d6878; background: linear-gradient(#e7eff8, #c5d4e5 48%, #a5b9d1 52%, #c0d4ea); }
.emu-ctl .red { width: 47px; border: 0; background: linear-gradient(#e0a599, #c96657 48%, #b5301c 52%, #d2705d); }
.emu-body { display: flex; background: #000; border: 1px solid #172a48; outline: 1px solid rgba(255, 255, 255, .4); }
.phone { position: relative; flex: 1; font-family: Roboto, sans-serif; }
.phone-status { display: flex; align-items: center; justify-content: flex-end; height: 28px; border-bottom: 1px solid #161616; padding-right: 7px; color: #33a9d4; }
.phone-status span { font-size: 17px; margin-left: 8px; }
.bat { margin-left: 6px; }
.phone-bar { display: flex; align-items: center; height: 51px; border-bottom: 2px solid #29a3d0; padding-left: 4px; gap: 3px; }
.phone-bar h2 { font: 400 20px/24px Roboto, sans-serif; color: #f3f3f3; margin-left: 4px; }
.list { margin: 5px 17px 3px; height: 487px; display: flex; flex-direction: column; border-top: 1px solid #1d1d1d; }
.item { flex: 1; display: flex; flex-direction: column; border-bottom: 1px solid #262626; padding: 11px 9px 0; color: #b4b4b4; }
.item span { font-size: 20px; line-height: 26px; }
.item small { font-size: 15px; line-height: 22px; color: #ababab; }
.water { position: absolute; left: 1px; bottom: 0; font: 300 24px/30px Roboto, sans-serif; color: rgba(190, 190, 190, .36); white-space: nowrap; }
.mark-phone { left: 20px; bottom: 138px; width: 162px; height: 49px; }
.tools { width: 49px; flex: none; display: flex; flex-direction: column; align-items: center; }
.tools button { height: 49px; display: grid; place-items: center; }
.tools svg { width: 34px; height: 34px; }
.sep { height: 34px; }
.gps { font: 900 8px "DejaVu Sans", sans-serif; fill: #fff; }
</style>
